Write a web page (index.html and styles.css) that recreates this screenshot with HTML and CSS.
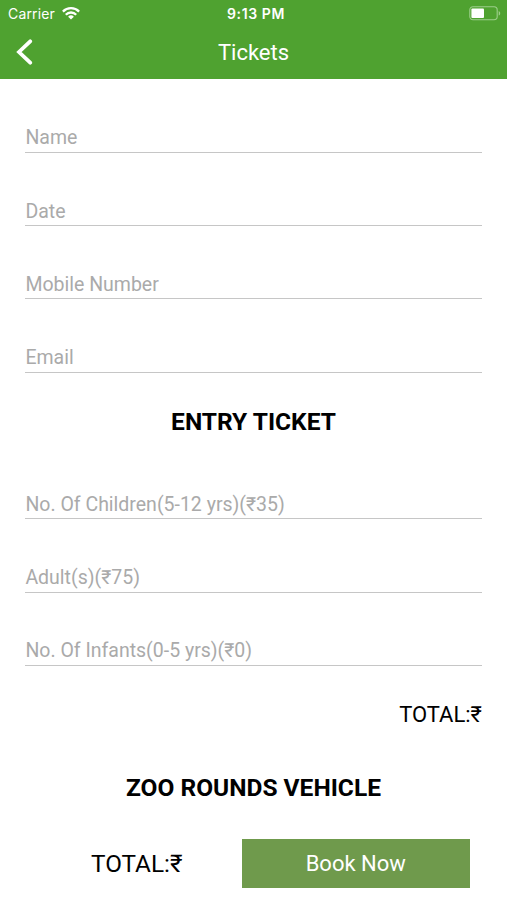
FILE: index.html
```html
<!DOCTYPE html>
<html lang="en">
<head>
    <meta charset="UTF-8">
    <meta name="viewport" content="width=device-width, initial-scale=1.0">
    <title>Tickets</title>
    <link rel="stylesheet" href="styles.css">
</head>
<body>
    <header class="header">
        <div class="status-bar">
            <div class="carrier">
                <span>Carrier</span>
                <svg class="wifi" viewBox="0 0 18 13" width="18" height="13">
                    <path d="M0.9 4.6a11.4 11.4 0 0 1 16.2 0M3.8 7.7a7.2 7.2 0 0 1 10.4 0" fill="none" stroke="#fff" stroke-width="2.3"/>
                    <path d="M6.1 9.7a4.1 4.1 0 0 1 5.8 0L9 12.6z" fill="#fff"/>
                </svg>
            </div>
            <span class="time">9:13 PM</span>
            <svg class="battery" viewBox="0 0 32 15" width="32" height="15">
                <rect x="0.8" y="0.8" width="27.4" height="12.9" rx="3.2" fill="none" stroke="#9dce8a" stroke-width="1.1"/>
                <rect x="2.4" y="2.4" width="12.6" height="9.7" rx="1" fill="#fff"/>
                <path d="M29.7 5v4.6c2-.8 2-3.8 0-4.6z" fill="#9dce8a"/>
            </svg>
        </div>
        <div class="nav-bar">
            <a class="back" href="#" aria-label="Back">
                <svg viewBox="0 0 18 26" width="18" height="26">
                    <path d="M15.2 2.3L4 13l11.2 10.7" fill="none" stroke="#fff" stroke-width="3.8" stroke-linecap="round"/>
                </svg>
            </a>
            <h1>Tickets</h1>
        </div>
    </header>

    <main class="ticket-form">
        <div class="field"><label>Name</label></div>
        <div class="field"><label>Date</label></div>
        <div class="field"><label>Mobile Number</label></div>
        <div class="field"><label>Email</label></div>

        <h2>ENTRY TICKET</h2>

        <div class="field"><label>No. Of Children(5-12 yrs)(₹35)</label></div>
        <div class="field"><label>Adult(s)(₹75)</label></div>
        <div class="field"><label>No. Of Infants(0-5 yrs)(₹0)</label></div>
        <div class="total">TOTAL:₹</div>

        <h2>ZOO ROUNDS VEHICLE</h2>
    </main>

    <footer class="footer">
        <div class="footer-total">TOTAL:₹</div>
        <button type="button">Book Now</button>
    </footer>
</body>
</html>
```

FILE: styles.css
```css
* {
    margin: 0;
    padding: 0;
    box-sizing: border-box;
}

body {
    font-family: Roboto, sans-serif;
    color: #000;
    background: #fff;
    height: 900px;
    overflow: hidden;
}

.header {
    height: 79px;
    background: #4fa230;
    color: #fff;
}

.status-bar {
    display: grid;
    grid-template-columns: 1fr auto 1fr;
    align-items: center;
    height: 27px;
    padding: 0 6px 0 8px;
    font-family: Inter, sans-serif;
    font-size: 14px;
}

.carrier {
    display: flex;
    align-items: center;
    gap: 7px;
    letter-spacing: 0.15px;
}

.time {
    padding-left: 3px;
    font-weight: 600;
    letter-spacing: 0.6px;
}

.battery {
    justify-self: end;
}

.nav-bar {
    display: grid;
    grid-template-columns: 1fr auto 1fr;
    align-items: center;
    height: 50px;
    padding: 0 15px;
}

.back svg {
    display: block;
}

h1 {
    font-size: 22px;
    font-weight: 400;
}

.ticket-form {
    display: grid;
    grid-auto-rows: 73.3px;
    padding: 0.5px 25px 0;
}

.field {
    display: flex;
    align-items: flex-end;
    padding-bottom: 2.5px;
    border-bottom: 1px solid #c6c6c6;
}

.field label {
    padding-left: 0.4px;
    font-size: 19.5px;
    line-height: 23px;
    color: #aaa;
}

h2 {
    padding-top: 35px;
    font-size: 24.5px;
    line-height: 28px;
    font-weight: 700;
    text-align: center;
}

.total {
    padding-top: 36px;
    font-size: 22px;
    line-height: 26px;
    text-align: right;
}

.footer {
    display: flex;
    align-items: center;
    height: 49px;
    margin-top: 26.5px;
    padding: 0 37px;
}

.footer-total {
    flex: 1;
    padding-left: 54px;
    font-size: 24.3px;
}

button {
    width: 228.5px;
    height: 49px;
    border: none;
    background: #6f9a4c;
    color: #fff;
    font-family: inherit;
    font-size: 22px;
}
```
